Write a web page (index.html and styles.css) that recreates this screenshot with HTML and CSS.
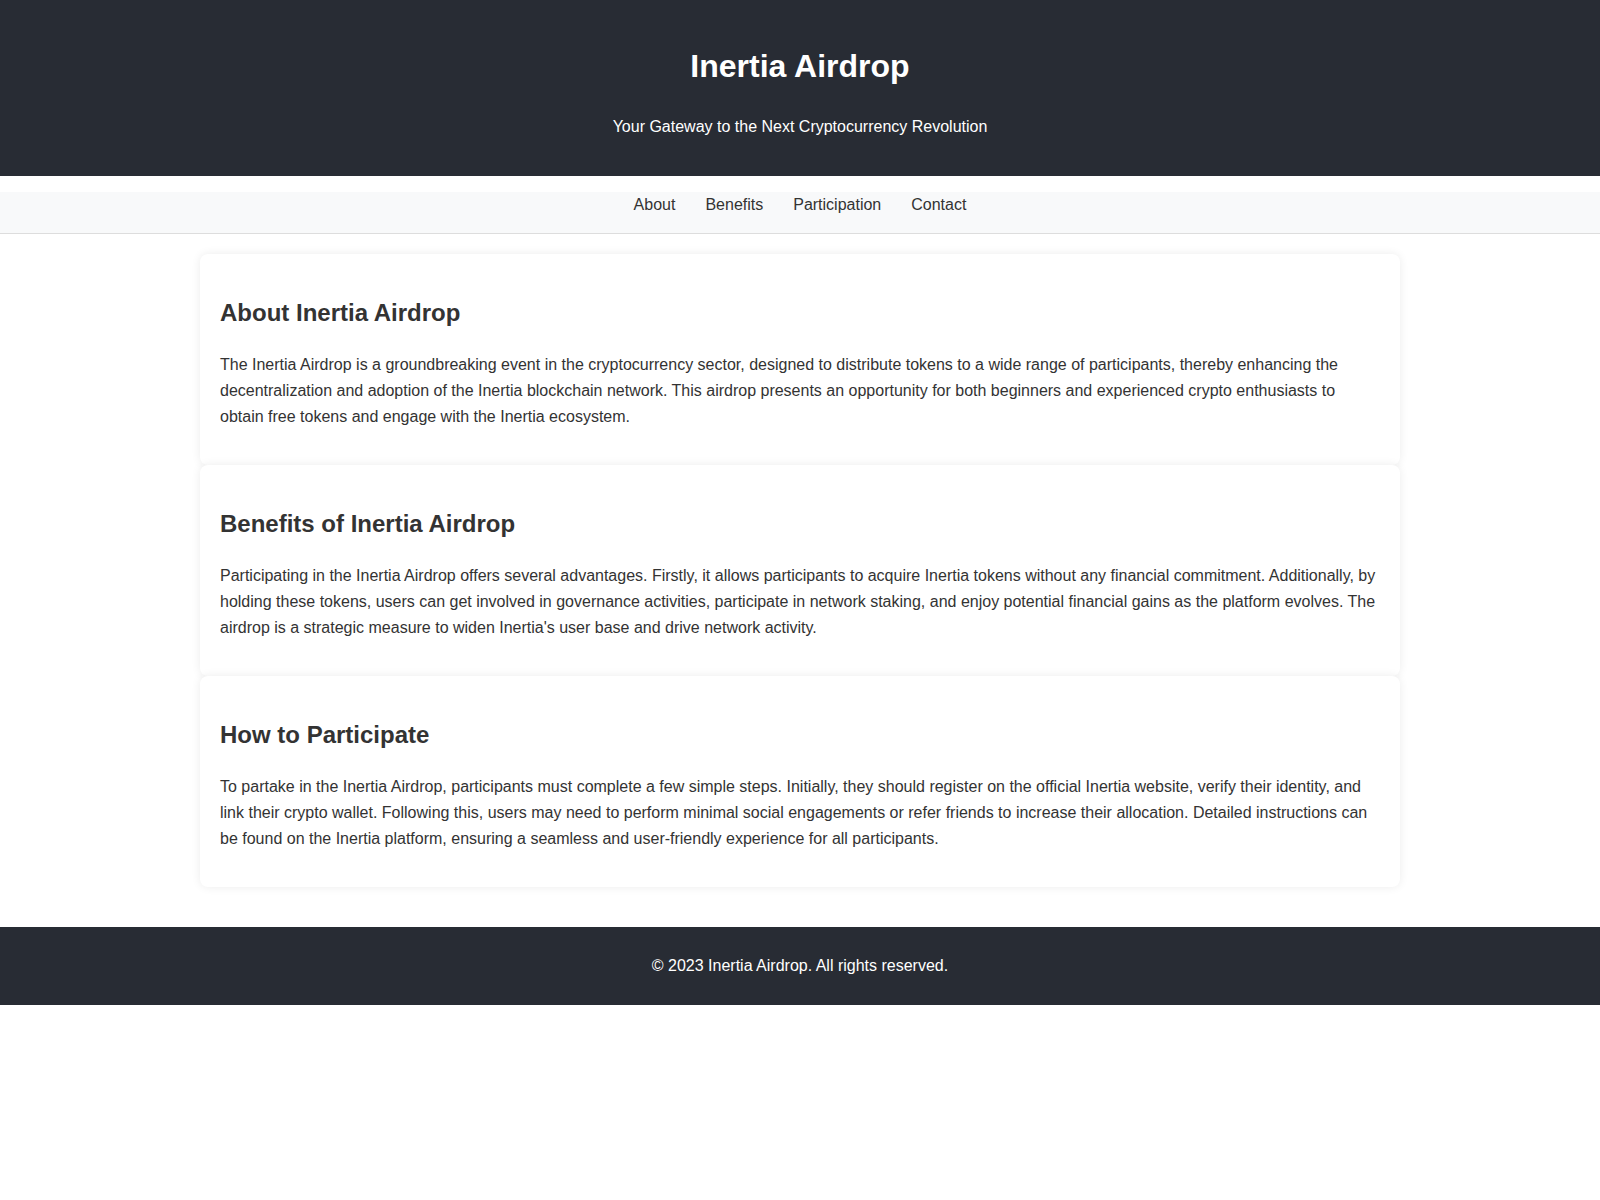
FILE: index.html
```html
<!DOCTYPE html>
<html lang="en">
<head>
    <meta charset="UTF-8">
    <meta name="viewport" content="width=device-width, initial-scale=1.0">
    <title>Inertia Airdrop</title>
    <link rel="stylesheet" href="styles.css">
</head>
<body>

    <header>
        <h1>Inertia Airdrop</h1>
        <p>Your Gateway to the Next Cryptocurrency Revolution</p>
    </header>

    <nav>
        <ul>
            <li><a href="#about">About</a></li>
            <li><a href="#benefits">Benefits</a></li>
            <li><a href="#participation">Participation</a></li>
            <li><a href="#contact">Contact</a></li>
        </ul>
    </nav>

    <main class="container">
        <section id="about" class="card">
            <h2>About Inertia Airdrop</h2>
            <p>The Inertia Airdrop is a groundbreaking event in the cryptocurrency sector, designed to distribute tokens to a wide range of participants, thereby enhancing the decentralization and adoption of the Inertia blockchain network. This airdrop presents an opportunity for both beginners and experienced crypto enthusiasts to obtain free tokens and engage with the Inertia ecosystem.</p>
        </section>

        <section id="benefits" class="card">
            <h2>Benefits of Inertia Airdrop</h2>
            <p>Participating in the Inertia Airdrop offers several advantages. Firstly, it allows participants to acquire Inertia tokens without any financial commitment. Additionally, by holding these tokens, users can get involved in governance activities, participate in network staking, and enjoy potential financial gains as the platform evolves. The airdrop is a strategic measure to widen Inertia's user base and drive network activity.</p>
        </section>

        <section id="participation" class="card">
            <h2>How to Participate</h2>
            <p>To partake in the Inertia Airdrop, participants must complete a few simple steps. Initially, they should register on the official Inertia website, verify their identity, and link their crypto wallet. Following this, users may need to perform minimal social engagements or refer friends to increase their allocation. Detailed instructions can be found on the Inertia platform, ensuring a seamless and user-friendly experience for all participants.</p>
        </section>
    </main>

    <footer id="contact">
        <p>&copy; 2023 Inertia Airdrop. All rights reserved.</p>
    </footer>

</body>
</html>
```

FILE: styles.css
```css
body {
    font-family: Arial, "Liberation Sans", sans-serif;
    line-height: 1.6;
    margin: 0;
    padding: 0;
    color: #333;
    background-color: #fff;
}
header {
    background-color: #282c34;
    color: white;
    text-align: center;
    padding: 20px;
}
nav {
    background-color: #f8f9fa;
    border-bottom: 1px solid #ddd;
}
nav ul {
    list-style: none;
    padding: 0;
    display: flex;
    justify-content: center;
    gap: 30px;
}
nav ul li a {
    color: #333;
    text-decoration: none;
}
.container {
    max-width: 1200px;
    margin: 0 auto;
    padding: 20px 0;
}
.card {
    background-color: white;
    padding: 20px;
    border-radius: 8px;
    box-shadow: 0 0 10px rgba(0, 0, 0, 0.08);
}
footer {
    background-color: #282c34;
    color: white;
    text-align: center;
    padding: 10px;
    margin-top: 20px;
}
```
